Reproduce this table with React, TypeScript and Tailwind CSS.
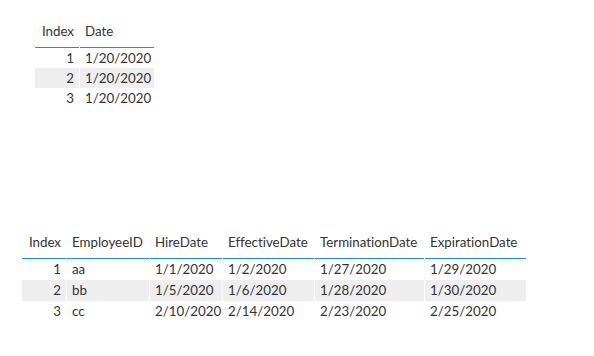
type Col = { name: string; width: string; right?: boolean };

function DataTable({ cols, rows, rowH }: { cols: Col[]; rows: string[][]; rowH: string }) {
    return (
        <div className="w-fit">
            <div className="flex gap-px">
                {cols.map((c) => (
                    <div
                        key={c.name}
                        className={`${c.width} pb-[6px] px-[5px] leading-[20px] border-b border-[#118dff] whitespace-nowrap ${
                            c.right ? "text-right" : "text-left"
                        }`}
                    >
                        {c.name}
                    </div>
                ))}
            </div>
            {rows.map((r, i) => (
                <div key={i} className="flex gap-px">
                    {r.map((v, j) => (
                        <div
                            key={j}
                            className={`${cols[j].width} ${rowH} px-[5px] whitespace-nowrap ${
                                cols[j].right ? "text-right" : "text-left"
                            } ${i % 2 === 1 ? "bg-[#eeeeee]" : ""}`}
                        >
                            {v}
                        </div>
                    ))}
                </div>
            ))}
        </div>
    );
}

export default function App() {
    const dateCols: Col[] = [
        { name: "Index", width: "w-[44px]", right: true },
        { name: "Date", width: "w-[74px]" },
    ];
    const dateRows = [
        ["1", "1/20/2020"],
        ["2", "1/20/2020"],
        ["3", "1/20/2020"],
    ];

    const empCols: Col[] = [
        { name: "Index", width: "w-[44px]", right: true },
        { name: "EmployeeID", width: "w-[82px]" },
        { name: "HireDate", width: "w-[72px]" },
        { name: "EffectiveDate", width: "w-[91px]" },
        { name: "TerminationDate", width: "w-[109px]" },
        { name: "ExpirationDate", width: "w-[101px]" },
    ];
    const empRows = [
        ["1", "aa", "1/1/2020", "1/2/2020", "1/27/2020", "1/29/2020"],
        ["2", "bb", "1/5/2020", "1/6/2020", "1/28/2020", "1/30/2020"],
        ["3", "cc", "2/10/2020", "2/14/2020", "2/23/2020", "2/25/2020"],
    ];

    return (
        <div
            className="w-[594px] h-[356px] bg-white text-[#333333] text-[13.33px] overflow-hidden [font-variant-ligatures:none]"
            style={{ fontFamily: "Lato, 'Open Sans', sans-serif" }}
        >
            <div className="pt-[21px] pl-[35px]">
                <DataTable cols={dateCols} rows={dateRows} rowH="h-[20px] leading-[20px]" />
            </div>
            <div className="mt-[124px] pl-[22px]">
                <DataTable cols={empCols} rows={empRows} rowH="h-[21px] leading-[21px]" />
            </div>
        </div>
    );
}
